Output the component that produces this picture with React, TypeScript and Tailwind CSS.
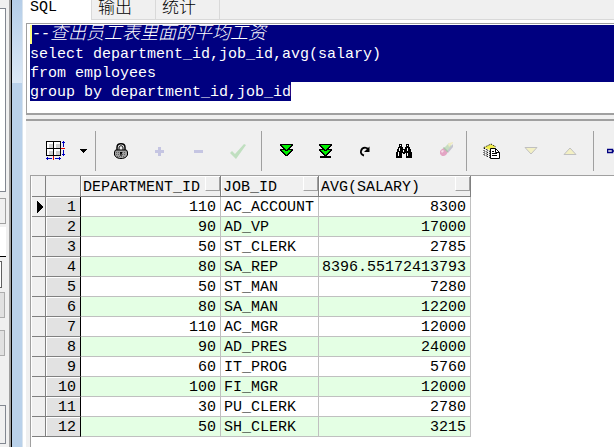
import type { ReactNode } from "react";
import clsx from "clsx";

interface ResultRow {
  department: number;
  job: string;
  salary: string;
}

const rows: ResultRow[] = [
  { department: 110, job: "AC_ACCOUNT", salary: "8300" },
  { department: 90, job: "AD_VP", salary: "17000" },
  { department: 50, job: "ST_CLERK", salary: "2785" },
  { department: 80, job: "SA_REP", salary: "8396.55172413793" },
  { department: 50, job: "ST_MAN", salary: "7280" },
  { department: 80, job: "SA_MAN", salary: "12200" },
  { department: 110, job: "AC_MGR", salary: "12000" },
  { department: 90, job: "AD_PRES", salary: "24000" },
  { department: 60, job: "IT_PROG", salary: "5760" },
  { department: 100, job: "FI_MGR", salary: "12000" },
  { department: 30, job: "PU_CLERK", salary: "2780" },
  { department: 50, job: "SH_CLERK", salary: "3215" },
];

interface ToolButtonProps {
  label: string;
  children: ReactNode;
  narrow?: boolean;
  disabled?: boolean;
}

function ToolButton({ label, children, narrow, disabled }: ToolButtonProps) {
  return (
    <button
      type="button"
      aria-label={label}
      disabled={disabled}
      className={clsx("flex h-10 shrink-0 items-center justify-center", narrow ? "w-4" : "w-[39px]")}
    >
      {children}
    </button>
  );
}

function Separator() {
  return <div className="ml-1 mr-[5px] h-10 w-px shrink-0 bg-[#a0a0a0]" />;
}

function GridIcon() {
  return (
    <svg width="20" height="20" viewBox="0 0 20 20" shapeRendering="crispEdges">
      <rect width="15" height="15" fill="#000" />
      <path d="M1 1h6v6H1zM8 1h6v6H8zM1 8h6v6H1zM8 8h6v6H8z" fill="#fff" />
      <path d="M3 3h4v4H3zM10 3h4v4h-4zM3 10h4v4H3zM10 10h4v4h-4z" fill="#d0d0d0" />
      <path d="M15 7h4v1h-4zM7 15h1v4H7z" fill="#e00000" />
      <path
        d="M17 0h1v6h-1zM16 1h3v1h-3zM17 9h1v6h-1zM16 13h3v1h-3zM0 17h6v1H0zM1 16h1v3H1zM9 17h6v1H9zM13 16h1v3h-1z"
        fill="#0000c0"
      />
    </svg>
  );
}

function LockIcon() {
  return (
    <svg width="14" height="16" viewBox="0 0 14 16">
      <path d="M3 8V4.500C3 2 4.500.8 7 .8S11 2 11 4.500V8" fill="none" stroke="#000" strokeWidth="1.500" />
      <path d="M5 7V5c0-1.500.7-2.200 2-2.200S9 3.500 9 5v2" fill="none" stroke="#000" />
      <path d="M1.500 7h11l1 2v3l-2 2.500-3 1h-3l-3-1-2-2.500V9z" fill="#a0a0a0" stroke="#000" />
      <path d="M2 9.500h10M2 11.500h10M3 13.500h8" stroke="#606060" strokeDasharray="1 1" />
      <path d="M6 9h2v1.500l-.5.500v2h-1v-2L6 10.500z" fill="#000" />
    </svg>
  );
}

function FetchIcon({ last }: { last?: boolean }) {
  return (
    <svg width="13" height="14" viewBox="0 0 13 14" shapeRendering="crispEdges">
      <path d="M0 0h13v2h-1v1h-1v1h-1v1h3v2h-1v1h-1v1h-1v1H9v1H8v1H5v-1H4v-1H3V9H2V8H1V7H0V5h3V4H2V3H1V2H0z" fill="#000" />
      <path d="M2 1h9v1h-1v1H9v1H8v1H7v1H6V5H5V4H4V3H3V2H2z" fill="#00f000" />
      <path d="M2 6h3v1h3V6h3v1h-1v1H9v1H8v1H7v1H6v-1H5V9H4V8H3V7H2z" fill="#00f000" />
      {last && <path d="M1 12h11v2H1z" fill="#000" />}
    </svg>
  );
}

function RefreshIcon() {
  return (
    <svg width="12" height="13" viewBox="0 0 12 13">
      <path d="M5 10.500C2.500 10 1.500 8 2 6s2-3.300 4-3.300 3 1 3.500 2" fill="none" stroke="#000" strokeWidth="1.800" />
      <path d="M10.500 1.500v5.500H5z" fill="#000" />
    </svg>
  );
}

function BinocularsIcon() {
  return (
    <svg width="16" height="15" viewBox="0 0 16 15" shapeRendering="crispEdges">
      <path d="M3 0h3v3h1v2h2V3h1V0h3v3h1v2h1v3h1v6h-6V9H9v1H7V9H6v5H0V8h1V5h1V3h1z" fill="#000" />
      <path d="M4 1h1v1H4zM11 1h1v1h-1zM3 4h1v3H3zM11 4h1v3h-1zM2 8h1v4H2zM11 9h1v3h-1zM7 6h1v2H7z" fill="#fff" />
    </svg>
  );
}

function EraserIcon() {
  return (
    <svg width="23" height="18" viewBox="-8 0 23 18">
      <path d="M5 6l5-5 3 3-5 6z" fill="#c6ddc0" />
      <path d="M9 2l1-1 4-1v1l-4 4z" fill="#efebc4" />
      <path d="M8 9l6-7v3l-5 6z" fill="#c4c4cf" />
      <path d="M3 7l2-1 4 4-2 3-2 1H3l-2-2v-3z" fill="#e3a5c4" />
      <path d="M5 5l4 4v1H8L4 6z" fill="#a9c3aa" />
      <path d="M2 9l2-1 1 1-2 2z" fill="#f7dce8" />
    </svg>
  );
}

function SheetsIcon() {
  return (
    <svg width="17" height="16" viewBox="0 0 17 16">
      <path d="M.5 4.500L8 .5l5 3v9l-6 3-6.500-3z" fill="#fff" />
      <path d="M1 4.500L8 1l5 3-6 3z" fill="#f2ee50" />
      <path d="M1 4.500L8 1l5 3" fill="none" stroke="#000" strokeDasharray="1 1" />
      <path d="M.5 5l6.500 3.500M.5 7.500l6.500 3M.5 9.500l6.500 3M.5 11.500l6.500 3" stroke="#000" strokeDasharray="2 1" />
      <path d="M7.500 5.500h5l4 4v6h-9z" fill="#fff" stroke="#000" />
      <path d="M12.500 5.500v4h4M9 8.500h2M9 10.500h5M9 12.500h5" fill="none" stroke="#000" />
    </svg>
  );
}

const cell = "h-5 overflow-hidden whitespace-nowrap border-b border-r border-[#c0c0c0] pb-0 pt-[3px]";
const head = "h-[21px] overflow-hidden whitespace-nowrap border-b border-r border-[#808080] bg-[#f0f0f0] p-0 text-left font-normal";

function ColumnHeader({ title }: { title: string }) {
  return (
    <th className={head}>
      <div className="flex h-5 items-start justify-between border-l border-t border-white">
        <span className="pl-px leading-[22px]">{title}</span>
        <button
          type="button"
          aria-label={`Sort by ${title}`}
          className="h-[14px] w-[15px] shrink-0 border-b border-l border-r border-[#a0a0a0] border-l-white"
        />
      </div>
    </th>
  );
}

function ResultTable() {
  return (
    <table className="w-[439px] table-fixed border-separate border-spacing-0 text-[15px] leading-4 text-black">
      <colgroup>
        <col className="w-[14px]" />
        <col className="w-[35px]" />
        <col className="w-[140px]" />
        <col className="w-[98px]" />
        <col className="w-[152px]" />
      </colgroup>
      <thead>
        <tr>
          <th className={head} />
          <th className={head} />
          <ColumnHeader title="DEPARTMENT_ID" />
          <ColumnHeader title="JOB_ID" />
          <ColumnHeader title="AVG(SALARY)" />
        </tr>
      </thead>
      <tbody>
        {rows.map((row, i) => (
          <tr key={i} className={i % 2 ? "bg-[#e4ffe4]" : "bg-white"}>
            <td className="h-5 border-b border-r border-[#808080] bg-[#f0f0f0] p-0">
              {i === 0 && (
                <svg width="8" height="12" viewBox="0 0 8 12" className="ml-1" shapeRendering="crispEdges">
                  <path d="M1 0l6 6-6 6z" fill="#000" />
                </svg>
              )}
            </td>
            <td className="h-5 border-b border-r border-b-[#808080] border-r-black bg-[#e2e2e2] p-0">
              <div className="h-[19px] border-l border-t border-white pr-1 pt-[2px] text-right">{i + 1}</div>
            </td>
            <td className={clsx(cell, "pr-1 text-right")}>{row.department}</td>
            <td className={clsx(cell, "pl-[3px]")}>{row.job}</td>
            <td className={clsx(cell, "pr-1 text-right")}>{row.salary}</td>
          </tr>
        ))}
      </tbody>
    </table>
  );
}

// Edge of the browser panel that sits behind the SQL window
function BackgroundPanel() {
  return (
    <div className="flex w-[9px] shrink-0 flex-col items-start bg-[#f0f0f0]">
      <div className="mt-2 h-[184px] w-[6px] border-b border-r border-t border-[#828790] bg-white" />
      <div className="mt-[6px] h-[26px] w-[6px] border-b border-r border-t border-[#a0a0a0]" />
      <div className="mt-[3px] h-[30px] w-[6px] border-b border-black bg-white" />
      <div className="mt-1 h-[27px] w-[2px] border-b border-r border-t border-[#606060] bg-white" />
      <div className="mt-1 h-[26px] w-[5px] border-b border-r border-t border-[#adadad] bg-[#e1e1e1]" />
      <div className="mt-3 h-[26px] w-[5px] border-b border-r border-t border-[#adadad] bg-[#e1e1e1]" />
      <div className="mt-[49px] h-[39px] w-[6px] border-b border-r border-t border-[#828790]" />
    </div>
  );
}

function Tabs() {
  return (
    <div role="tablist" className="flex h-5 items-stretch text-[17px] font-light leading-[17px]">
      <button type="button" role="tab" aria-selected="true" className="flex w-[68px] items-start bg-white pl-[7px] text-[15px] font-normal leading-4">
        SQL
      </button>
      <button type="button" role="tab" aria-selected="false" className="flex w-16 items-start border-b border-l border-[#d9d9d9] bg-[#f0f0f0] pl-[6px]">
        输出
      </button>
      <button type="button" role="tab" aria-selected="false" className="flex w-16 items-start border-b border-l border-[#d9d9d9] bg-[#f0f0f0] pl-[6px]">
        统计
      </button>
      <div className="flex-1 border-b border-l border-[#d9d9d9] bg-[#f0f0f0]" />
    </div>
  );
}

function Editor() {
  return (
    <div
      role="textbox"
      aria-label="SQL"
      aria-multiline="true"
      tabIndex={0}
      className="mt-[3px] h-[92px] overflow-hidden whitespace-pre border-b-2 border-l border-t border-[#a0a0a0] bg-white pl-[3px] pt-px text-[15px] leading-[21px] text-white outline-none"
    >
      <div className="flex h-[19px] items-center bg-[#000080] italic">
        <span className="h-[19px] w-[2px] bg-[#ffff80]" />
        --<span className="text-[18px] font-light leading-[19px]">查出员工表里面的平均工资</span>
      </div>
      <div className="h-[19px] bg-[#000080]">select department_id,job_id,avg(salary)</div>
      <div className="h-[19px] bg-[#000080]">from employees</div>
      <div className="h-[19px]">
        <span className="inline-block h-[19px] bg-[#000080] align-top">group by department_id,job_id</span>
      </div>
    </div>
  );
}

function Toolbar() {
  return (
    <div role="toolbar" className="flex h-[54px] items-center overflow-hidden pl-[10px] pt-[6px]">
      <ToolButton label="Grid layout">
        <GridIcon />
      </ToolButton>
      <ToolButton label="Grid layout options" narrow>
        <svg width="7" height="4" viewBox="0 0 7 4" shapeRendering="crispEdges">
          <path d="M0 0h7v1H6v1H5v1H4v1H3V3H2V2H1V1H0z" fill="#000" />
        </svg>
      </ToolButton>
      <Separator />
      <ToolButton label="Lock">
        <LockIcon />
      </ToolButton>
      <ToolButton label="Insert record" disabled>
        <svg width="9" height="9" viewBox="0 0 9 9">
          <path d="M3 0h3v3h3v3H6v3H3V6H0V3h3z" fill="#c5c5e2" />
        </svg>
      </ToolButton>
      <ToolButton label="Delete record" disabled>
        <svg width="9" height="3" viewBox="0 0 9 3">
          <path d="M0 0h9v3H0z" fill="#c5c5e2" />
        </svg>
      </ToolButton>
      <ToolButton label="Post changes" disabled>
        <svg width="16" height="15" viewBox="0 0 16 15">
          <path d="M0 9l2-2 3 3 9-10 2 1L6 15z" fill="#c0dfc0" />
        </svg>
      </ToolButton>
      <Separator />
      <ToolButton label="Fetch next page">
        <FetchIcon />
      </ToolButton>
      <ToolButton label="Fetch last page">
        <FetchIcon last />
      </ToolButton>
      <ToolButton label="Refresh">
        <RefreshIcon />
      </ToolButton>
      <ToolButton label="Find">
        <BinocularsIcon />
      </ToolButton>
      <ToolButton label="Clear" disabled>
        <EraserIcon />
      </ToolButton>
      <Separator />
      <ToolButton label="Copy records">
        <SheetsIcon />
      </ToolButton>
      <ToolButton label="Next record" disabled>
        <svg width="14" height="8" viewBox="0 0 14 8">
          <path d="M1 .5h12l-6 6.500z" fill="#f3f0c4" stroke="#c0c0c0" />
        </svg>
      </ToolButton>
      <ToolButton label="Previous record" disabled>
        <svg width="14" height="8" viewBox="0 0 14 8">
          <path d="M1 7.500h12L7 1z" fill="#f3f0c4" stroke="#c0c0c0" />
        </svg>
      </ToolButton>
      <Separator />
      <ToolButton label="Linked query">
        <svg width="24" height="12" viewBox="0 0 24 12">
          <path d="M.5 4.500h5v3h-5zM6 6h3l5-5h5M9 6l5 5h5M9 6h10" fill="none" stroke="#000080" strokeWidth="1.500" />
        </svg>
      </ToolButton>
    </div>
  );
}

export default function App() {
  return (
    <div className="flex min-h-screen overflow-hidden bg-[#f0f0f0] font-['Liberation_Mono','Noto_Sans_CJK_SC',monospace] text-black">
      <BackgroundPanel />
      <div className="w-[2px] shrink-0 bg-[#a0a0a0]" />
      <div className="w-px shrink-0 bg-black" />
      <div className="flex w-[10px] shrink-0 flex-col bg-[#b9d1ea]">
        <div className="h-[83px] bg-linear-to-b from-[#b4cde8] to-[#dce9f6]" />
      </div>
      <div className="w-px shrink-0 bg-[#d9e4ee]" />
      <main className="flex min-w-0 flex-1 flex-col bg-white">
        <Tabs />
        <div className="flex flex-1 flex-col pl-[3px]">
          <Editor />
          <div className="h-1 bg-[#f0f0f0]" />
          <section className="flex flex-1 flex-col border-t-2 border-[#a0a0a0] bg-[#f0f0f0]">
            <Toolbar />
            <div className="ml-1 flex-1 border-l border-t border-[#a0a0a0] bg-white pl-px">
              <ResultTable />
            </div>
          </section>
        </div>
      </main>
    </div>
  );
}
